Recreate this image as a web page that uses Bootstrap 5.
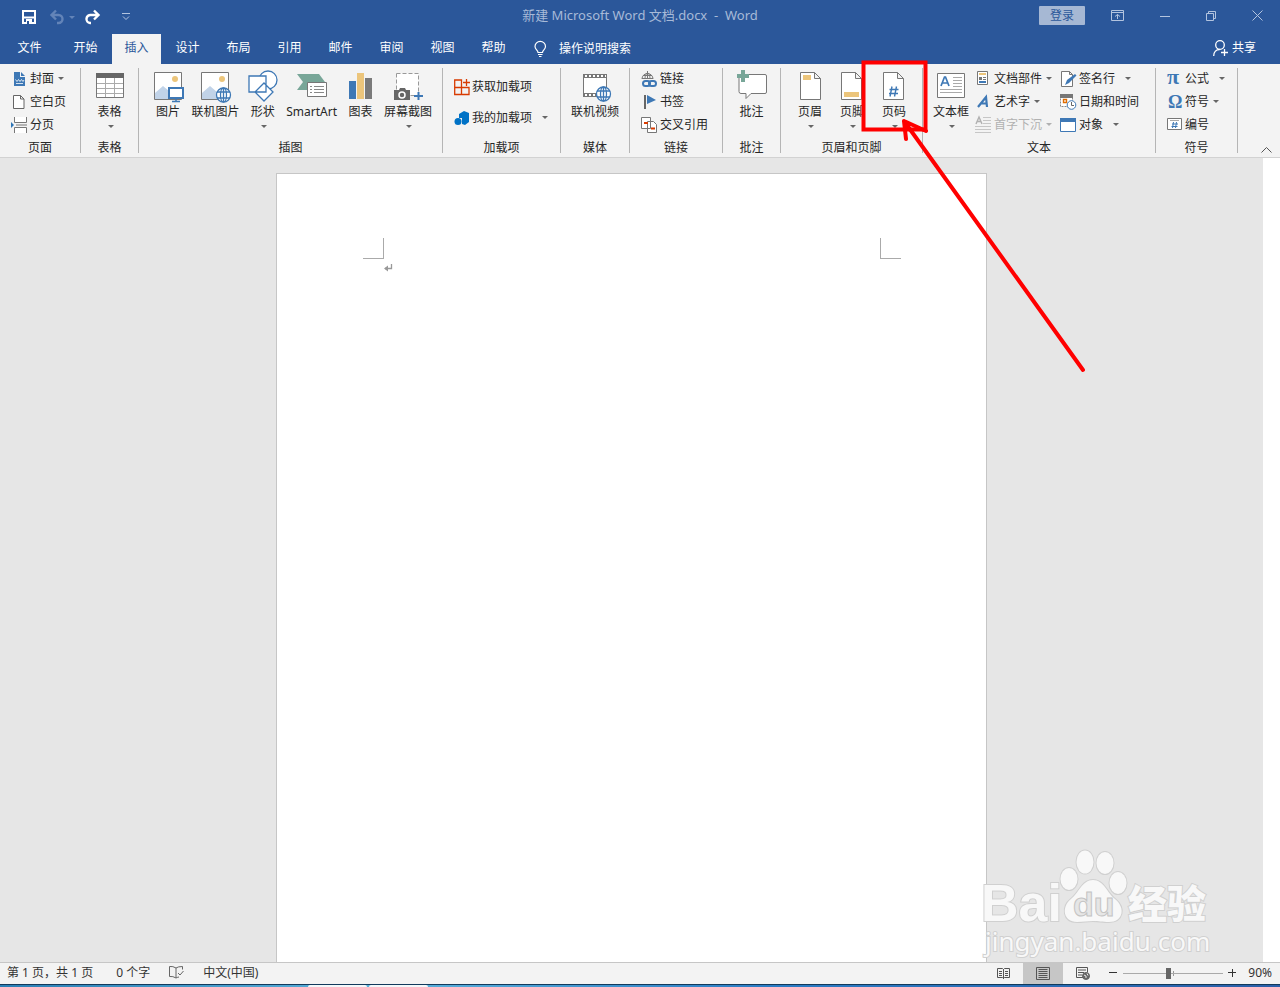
<!DOCTYPE html>
<html lang="zh-CN">
<head>
<meta charset="utf-8">
<meta name="viewport" content="width=device-width, initial-scale=1">
<title>新建 Microsoft Word 文档.docx - Word</title>
<link href="https://cdn.jsdelivr.net/npm/bootstrap@5.3.0/dist/css/bootstrap.min.css" rel="stylesheet">
<style>
  body { font: 12px/16px "Noto Sans", "Noto Sans CJK SC", sans-serif; color: #262626; background: #e6e6e6; }
  button { font: inherit; color: inherit; background: none; border: 0; padding: 0; white-space: nowrap; }
  svg { display: block; flex: none; overflow: visible; }
  .brand-bg { background: #2b579a; color: #fff; }
  .title-row { height: 34px; display: grid; grid-template-columns: 1fr auto 1fr; align-items: center; }
  .title-row h1 { font-size: 13px; line-height: 16px; font-weight: 400; color: #a7bad8; white-space: pre; margin: 0; padding-bottom: 4px; }
  .quick { padding-left: 22px; gap: 14px; }
  .quick .undo { gap: 4px; }
  .quick .redo { margin-left: -4px; margin-right: 4px; }
  .quick .undo .caret { border-top-color: #6384b8; }
  .win { gap: 36px; padding-right: 17px; padding-bottom: 3px; color: #b3c4df; }
  .signin { background: #a6b8d4; color: #2b579a; width: 46px; height: 19px; border-radius: 1px; line-height: 19px; margin-right: -10px; }
  .tabs-row { height: 30px; }
  .tabs-row .nav { gap: 2px; }
  .tabs-row .nav-link { width: 49px; height: 30px; padding: 0; line-height: 28px; text-align: center; color: #fff; border-radius: 0; }
  .tabs-row .file-tab { width: 59px; }
  .tabs-row .nav-link.active { background: #f3f3f3; color: #2b579a; }
  .tellme { gap: 12px; margin-left: 16px; }
  .share { gap: 4px; padding-right: 24px; padding-bottom: 2px; }
  .ribbon { height: 94px; background: #f3f3f3; border-bottom: 1px solid #d2d2d2; }
  .ribbon .vr { height: 85px; margin-top: 4px; opacity: 1; color: #b5b5b5; align-self: flex-start; flex: none; }
  .group { flex: none; display: flex; flex-direction: column; padding-top: 3px; }
  .group > .tools { height: 73px; display: flex; align-items: flex-start; }
  .group > .name { text-align: center; line-height: 16px; }
  .inset { padding-left: 11px; }
  .w57 { width: 57px; } .w68 { width: 68px; } .w80 { width: 80px; } .w81 { width: 81px; } .w92 { width: 92px; }
  .w117 { width: 117px; } .w141 { width: 141px; } .w232 { width: 232px; } .w303 { width: 303px; }
  .spread { justify-content: space-between; padding: 0 5px 0 12px; }
  .addins { padding: 4px 0 0 11px; }
  .pages { padding-left: 12px; gap: 8px; }
  .textual { padding-left: 5px; }
  .textual .stack + .stack { margin-left: 8px; }
  .big { display: flex; flex-direction: column; align-items: center; padding: 3px 5px 0; position: relative; }
  .big.narrow { width: 34px; }
  .big span { line-height: 18px; margin-top: 1px; }
  .big .caret { margin: 4px 0 0 2px; }
  .stack { display: flex; flex-direction: column; align-items: flex-start; }
  .textual .stack { margin-left: 1px; }
  .small-btn { display: flex; align-items: center; height: 23px; gap: 2px; }
  .small-btn .caret { margin-left: 2px; }
  .small-btn .caret.far { margin-left: 8px; }
  .caret { width: 0; height: 0; border: 3px solid transparent; border-top-color: #666; border-bottom: 0; }
  .tall .small-btn { height: 31px; }
  .disabled-tool { color: #b1b1b1; }
  .disabled-tool .caret { border-top-color: #b1b1b1; }
  .glyph { font-family: "Liberation Serif", serif; font-weight: 700; fill: #3e78b5; }
  .glyph.sans { font-family: "Liberation Sans", sans-serif; }
  .collapse-btn { padding: 0 8px 4px 0; }
  .callout-mark { position: absolute; left: 0; top: 0; pointer-events: none; z-index: 5; }
  .canvas { padding-top: 15px; min-height: 0; }
  .sheet { width: 711px; background: #fff; border: 1px solid #c6c6c6; border-bottom: 0; }
  .margins { padding: 64px 85px 0 86px; }
  .corner { width: 21px; height: 21px; border-bottom: 1px solid #aaa; }
  .corner.l { border-right: 1px solid #aaa; } .corner.r { border-left: 1px solid #aaa; }
  .pilcrow { margin: 5px 0 0 107px; }
  .scroll { width: 17px; background: #fff; }
  .watermark { position: absolute; right: 52px; bottom: 0; width: 246px; height: 118px; }
  .status { height: 22px; background: #f3f3f3; border-top: 1px solid #c6c6c6; color: #333; }
  .status .info { gap: 19px; padding: 0 0 2px 7px; }
  .status .tail { padding-right: 8px; }
  .status .view { width: 40px; height: 21px; display: flex; align-items: center; justify-content: center; }
  .status .view.on { background: #c6c6c6; }
  .status .minus { margin-left: 6px; }
  .status .pct { margin-left: 11px; padding-bottom: 1px; }
  .zoom { appearance: none; width: 100px; height: 12px; margin: 0 5px; background: linear-gradient(#aaa,#aaa) center/100% 1px no-repeat, linear-gradient(#999,#999) center/1px 5px no-repeat; }
  .zoom::-webkit-slider-thumb { appearance: none; width: 5px; height: 11px; background: #666; }
  .desk { height: 3px; padding-left: 308px; gap: 2px; border-top: 1px solid #123a5c; background: linear-gradient(90deg, #2a7fb5, #5cb3dc 30%, #2b7cc4 60%, #2b5fa8); }
  .desk i { width: 59px; background: #f4f8fb; border-radius: 2px 2px 0 0; }
</style>
</head>
<body>
<div class="vh-100 d-flex flex-column overflow-hidden">
<header class="brand-bg">
  <div class="title-row">
    <div class="quick d-flex align-items-center">
      <button aria-label="保存"><svg width="14" height="14" fill="none" stroke="#fff" stroke-width="2"><path d="M1 1h12v12H1zM1 7.500h12"/><path d="M4 9h6v4H4z" fill="#fff" stroke="none"/><path d="M5 11h2v3H5z" fill="#2b579a" stroke="none"/></svg></button>
      <button class="undo d-flex align-items-center" aria-label="撤消"><svg width="15" height="14" fill="none" stroke="#6384b8" stroke-width="2.400"><path d="M6 .5L1.500 5 6 9.500M2 5h6.500a4 4 0 0 1 0 8H7"/></svg><span class="caret"></span></button>
      <button class="redo" aria-label="恢复"><svg width="15" height="14" fill="none" stroke="#fff" stroke-width="2.400"><path d="M9 .5L13.500 5 9 9.500M13 5H6a4 4 0 0 0-1 8h1"/></svg></button>
      <button aria-label="自定义快速访问工具栏" class="ms-1"><svg width="8" height="8" fill="none" stroke="#b3c4df"><path d="M0 .5h8M1 3.500l3 3 3-3"/></svg></button>
    </div>
    <h1>新建 Microsoft Word 文档.docx  -  Word</h1>
    <div class="win d-flex align-items-center justify-content-end">
      <button class="signin">登录</button>
      <button aria-label="功能区显示选项"><svg width="13" height="11" fill="none" stroke="currentColor"><path d="M.5.5h12v10H.5zM.5 2.500h12M6.500 9V4.500M4 6.500l2.500-2 2.500 2"/></svg></button>
      <button aria-label="最小化"><svg width="10" height="10" stroke="currentColor"><path d="M0 5.500h10"/></svg></button>
      <button aria-label="还原"><svg width="10" height="10" fill="none" stroke="currentColor"><path d="M.5 2.500h7v7h-7zM2.500 2V.5h7v7H8"/></svg></button>
      <button aria-label="关闭"><svg width="11" height="11" stroke="currentColor"><path d="M.5.5l10 10M10.500.5l-10 10"/></svg></button>
    </div>
  </div>
  <div class="tabs-row d-flex">
    <nav class="nav flex-nowrap">
      <a class="nav-link file-tab" href="#">文件</a><a class="nav-link" href="#">开始</a><a class="nav-link active" href="#">插入</a><a class="nav-link" href="#">设计</a><a class="nav-link" href="#">布局</a><a class="nav-link" href="#">引用</a><a class="nav-link" href="#">邮件</a><a class="nav-link" href="#">审阅</a><a class="nav-link" href="#">视图</a><a class="nav-link" href="#">帮助</a>
    </nav>
    <button class="tellme d-flex align-items-center"><svg width="13" height="16" fill="none" stroke="#fff" stroke-width="1.200"><path d="M4 11.500C4 9 1 8.500 1 5.500a5.200 5 0 0 1 10.500 0c0 3-3 3.500-3 6zM4 13.500h4.500M5 15.500h2.500"/></svg>操作说明搜索</button>
    <button class="share d-flex align-items-center ms-auto"><svg width="15" height="16" fill="none" stroke="#fff" stroke-width="1.300"><circle cx="7" cy="5" r="4.300"/><path d="M.7 16c0-4 2.500-6.500 6-6.500M11.500 9v7M8 12.500h7"/></svg>共享</button>
  </div>
</header>

<div class="ribbon d-flex">
  <section class="group w80"><div class="tools inset"><div class="stack">
    <button class="small-btn"><svg width="17" height="16"><path d="M3 1h6v5h5v9H3z" fill="#3e78b5"/><path d="M10 1l4 4h-4z" fill="#3e78b5"/><path d="M4.500 8.500l1.500 2 1.500-2 1.500 2 1.500-2 1.500 2 1-1.500M5 12.500h7" fill="none" stroke="#fff" stroke-width=".8"/></svg>封面<i class="caret"></i></button>
    <button class="small-btn"><svg width="17" height="16" fill="#fff" stroke="#666"><path d="M2.500 1.500h7l3.500 3.500v9.500H2.500zM9.500 1.500V5H13"/></svg>空白页</button>
    <button class="small-btn"><svg width="17" height="16" fill="#fff" stroke="#777"><path d="M3.500 0v5.500h12V0M3.500 16v-5.500h12V16M5 8h11"/><path d="M0 5l3 3-3 3z" fill="#2e75b6" stroke="none"/></svg>分页</button>
  </div></div><div class="name">页面</div></section><div class="vr"></div>

  <section class="group w57"><div class="tools justify-content-center"><button class="big"><svg width="32" height="32"><path d="M2.500 3.500h27v24h-27z" fill="#fff" stroke="#777"/><path d="M2 3h28v5H2z" fill="#666"/><path d="M3 13.500h26M3 18.500h26M3 23.500h26M11.500 8v19M20.500 8v19" stroke="#aaa"/></svg><span>表格</span><i class="caret"></i></button></div><div class="name">表格</div></section><div class="vr"></div>

  <section class="group w303"><div class="tools spread">
    <button class="big narrow"><svg width="32" height="32"><path d="M2.500 2.500h27v27h-27z" fill="#fff" stroke="#777"/><circle cx="23" cy="9" r="3" fill="#ecc57b"/><path d="M3 29v-6l8-7 6 5v8z" fill="#c1d3e8"/><path d="M17 18h14v10H17z" fill="#fff" stroke="#3e78b5" stroke-width="2"/><path d="M24 28v3M20 31.500h8" stroke="#3e78b5" stroke-width="1.500"/></svg><span>图片</span></button>
    <button class="big"><svg width="32" height="32"><path d="M2.500 2.500h27v27h-27z" fill="#fff" stroke="#777"/><circle cx="23" cy="9" r="3" fill="#ecc57b"/><path d="M3 29v-6l8-7 7 6v7z" fill="#c1d3e8"/><g fill="#fff" stroke="#3e78b5" stroke-width="1.300"><circle cx="24.500" cy="25" r="7"/><ellipse cx="24.500" cy="25" rx="3" ry="7"/><path d="M18 22h13M18 28h13M24.500 18v14"/></g></svg><span>联机图片</span></button>
    <button class="big narrow"><svg width="32" height="32" fill="#fff" stroke="#3e78b5" stroke-width="1.300"><circle cx="21" cy="10" r="9"/><path d="M2 6h17v16H2zM17 13l9 9-9 9-9-9z"/></svg><span>形状</span><i class="caret"></i></button>
    <button class="big"><svg width="32" height="32"><path d="M1 4h22l6 8-7 8H1l6-8z" fill="#78a698"/><path d="M11.500 12.500h19v14h-19z" fill="#fff" stroke="#777"/><path d="M14 16.500h2M14 19.500h2M14 22.500h2M18 16.500h10M18 19.500h10M18 22.500h10" stroke="#888"/></svg><span>SmartArt</span></button>
    <button class="big narrow"><svg width="32" height="32"><path d="M4 11h7v18H4z" fill="#3e78b5"/><path d="M12 3h7v26h-7z" fill="#ecc57b"/><path d="M20 8h7v21h-7z" fill="#7a7a7a"/></svg><span>图表</span></button>
    <button class="big"><svg width="32" height="32"><path d="M4.500 3.500h22v22h-22z" fill="#fff" stroke="#999" stroke-dasharray="4 2"/><path d="M2 20h5l1-2h5l1 2h4v10H2z" fill="#666"/><circle cx="10" cy="25" r="3" fill="#666" stroke="#fff" stroke-width="1.500"/><path d="M22 26h9M26.500 22v8" stroke="#3e78b5" stroke-width="2"/></svg><span>屏幕截图</span><i class="caret"></i></button>
  </div><div class="name">插图</div></section><div class="vr"></div>

  <section class="group w117"><div class="tools addins"><div class="stack tall">
    <button class="small-btn"><svg width="16" height="16" fill="none" stroke="#d83b01" stroke-width="1.300"><path d="M7.500 15.500H.7V1h6.800v14.500H15V8.500H.7M12.500 0v7M9 3.500h7"/></svg>获取加载项</button>
    <button class="small-btn"><svg width="16" height="16" fill="#0072c6"><path d="M5 4l5-3 5 2v9l-4 3-3-1V8H5z"/><circle cx="4" cy="11.500" r="3.500"/></svg>我的加载项<i class="caret far"></i></button>
  </div></div><div class="name">加载项</div></section><div class="vr"></div>

  <section class="group w68"><div class="tools justify-content-center"><button class="big"><svg width="32" height="32"><path d="M4.500 4.500h23v22h-23z" fill="#fff" stroke="#777"/><path d="M4 6h24M4 25h14" stroke="#777" stroke-width="4"/><path d="M6 6h21M6 25h12" stroke="#fff" stroke-width="2" stroke-dasharray="2 2"/><g fill="#fff" stroke="#3e78b5" stroke-width="1.300"><circle cx="24.500" cy="24" r="7"/><ellipse cx="24.500" cy="24" rx="3" ry="7"/><path d="M18 21h13M18 27h13M24.500 17v14"/></g></svg><span>联机视频</span></button></div><div class="name">媒体</div></section><div class="vr"></div>

  <section class="group w92"><div class="tools inset"><div class="stack">
    <button class="small-btn"><svg width="17" height="16" fill="none"><g stroke="#777"><path d="M1 8a5.500 5.500 0 1 1 11 0M1 7.500h11M2 4.500h9M4 8c0-3 1-6 2.500-6S9 5 9 8M6.500 0v7"/></g><g stroke="#3e78b5" stroke-width="2"><rect x="2" y="10" width="7" height="5" rx="2.500"/><rect x="8" y="10" width="7" height="5" rx="2.500"/></g></svg>链接</button>
    <button class="small-btn"><svg width="17" height="16"><path d="M4 1v14" stroke="#666" stroke-width="2"/><path d="M6 1l9 5-9 4z" fill="#3e78b5"/></svg>书签</button>
    <button class="small-btn"><svg width="17" height="16" fill="#fff" stroke="#777"><path d="M.5.5h9v11h-9zM6.500 4.500h6l3 3v8h-9z"/><path d="M3 6h4M10 11.500h4" stroke="#d83b01" stroke-width="2"/></svg>交叉引用</button>
  </div></div><div class="name">链接</div></section><div class="vr"></div>

  <section class="group w57"><div class="tools justify-content-center"><button class="big"><svg width="32" height="32"><path d="M4 4.500h25q1.500 0 1.500 1.500v16q0 1.500-1.500 1.500H15l-5 5v-5H5q-2 0-2-2V5z" fill="#fff" stroke="#777"/><path d="M5 0h4v4h4v4H9v4H5V8H1V4h4z" fill="#78a698"/></svg><span>批注</span></button></div><div class="name">批注</div></section><div class="vr"></div>

  <section class="group w141"><div class="tools pages">
    <button class="big narrow"><svg width="32" height="32"><path d="M6.500 2.500h14l6 6v21h-20zM20.500 2.500v6h6" fill="#fff" stroke="#777"/><path d="M9 5h8v5H9z" fill="#ecc57b"/></svg><span>页眉</span><i class="caret"></i></button>
    <button class="big narrow"><svg width="32" height="32"><path d="M5.500 2.500h14l6 6v21h-20zM19.500 2.500v6h6" fill="#fff" stroke="#777"/><path d="M8 22h15v5H8z" fill="#ecc57b"/></svg><span>页脚</span><i class="caret"></i></button>
    <button class="big narrow"><svg width="32" height="32"><path d="M5.500 2.500h14l6 6v21h-20zM19.500 2.500v6h6" fill="#fff" stroke="#777"/><path d="M14 16.500l-2 10M18.500 16.500l-2 10M11.500 19.500h9M11 23.500h9" stroke="#3e78b5" stroke-width="1.400"/></svg><span>页码</span><i class="caret"></i>
      <svg class="callout-mark" width="210" height="310" fill="none" stroke="#f00"><path d="M-13.500-4.500h62v67h-62z" stroke-width="4"/><path d="M206 303L27 54l22 10M27 54l2 18" stroke-width="4" stroke-linecap="round" stroke-linejoin="round"/></svg></button>
  </div><div class="name">页眉和页脚</div></section><div class="vr"></div>

  <section class="group w232"><div class="tools textual">
    <button class="big"><svg width="32" height="32"><path d="M2.500 3.500h27v24h-27z" fill="#fff" stroke="#777"/><path d="M18 7.500h9M18 10.500h9M18 13.500h9M18 16.500h9M5 19.500h22M5 22.500h22" stroke="#aaa"/><path d="M6 16l3.500-9h1l3.500 9M7.500 13h5" stroke="#3e78b5" stroke-width="1.700" fill="none"/></svg><span>文本框</span><i class="caret"></i></button>
    <div class="stack">
      <button class="small-btn"><svg width="17" height="16"><path d="M2.500.5h10v13h-10z" fill="#fff" stroke="#777"/><path d="M4 2h7v2H4z" fill="#ecc57b"/><path d="M4 6h3v3H4z" fill="#777"/><path d="M8 6.500h3M8 8.500h3" stroke="#777"/><path d="M4 10h7v2H4z" fill="#3e78b5"/></svg>文档部件<i class="caret"></i></button>
      <button class="small-btn"><svg width="17" height="16"><path d="M3 13l8-10 1 10M5 9.500h6" fill="none" stroke="#3e78b5" stroke-width="2.200"/></svg>艺术字<i class="caret"></i></button>
      <button class="small-btn disabled-tool" disabled><svg width="17" height="16" fill="none" stroke="#c6c6c6"><path d="M8 .5h8M8 3.500h8M8 6.500h8M0 9.500h16M0 12.500h16M0 15.500h16"/><path d="M1 7L4 0l3 7M2 4.500h4" stroke="#b1b1b1" stroke-width="1.400"/></svg>首字下沉<i class="caret"></i></button>
    </div>
    <div class="stack">
      <button class="small-btn"><svg width="17" height="16"><path d="M1.500.5h8l3 3v12h-11zM9.500.5v3h3" fill="#fff" stroke="#777"/><path d="M5 14l2-5 8-6 1.500 1.500L9 12z" fill="#3e78b5"/></svg>签名行<i class="caret far"></i></button>
      <button class="small-btn"><svg width="17" height="16"><path d="M.5.5h12v12H.5z" fill="#fff" stroke="#888" stroke-dasharray="2 1"/><path d="M0 0h13v4H0z" fill="#777"/><path d="M3.500 5.500h3v3h-3z" fill="none" stroke="#e06c00" stroke-width="1.400"/><circle cx="11.500" cy="11" r="4.300" fill="#fff" stroke="#3e78b5"/><path d="M11.500 8v3.500H14" fill="none" stroke="#666"/></svg>日期和时间</button>
      <button class="small-btn"><svg width="17" height="16"><path d="M.5 1.500h15v13H.5z" fill="#fff" stroke="#3e78b5"/><path d="M0 1h16v4H0z" fill="#3e78b5"/></svg>对象<i class="caret far"></i></button>
    </div>
  </div><div class="name">文本</div></section><div class="vr"></div>

  <section class="group w81"><div class="tools inset"><div class="stack">
    <button class="small-btn"><svg width="16" height="16" aria-hidden="true"><text class="glyph" x="0" y="13" font-size="22">π</text></svg>公式<i class="caret far"></i></button>
    <button class="small-btn"><svg width="16" height="16" aria-hidden="true"><text class="glyph" x="1" y="14" font-size="18">Ω</text></svg>符号<i class="caret"></i></button>
    <button class="small-btn"><svg width="16" height="16"><path d="M.5 1.500h14v11H.5z" fill="#fff" stroke="#777"/><path d="M3 3.500h9" stroke="#aaa"/><path d="M6.500 5l-1 6M9.500 5l-1 6M5 7h6M4.500 9.500h6" stroke="#3e78b5"/></svg>编号</button>
  </div></div><div class="name">符号</div></section><div class="vr"></div>
  <button class="collapse-btn ms-auto align-self-end" aria-label="折叠功能区"><svg width="11" height="6" fill="none" stroke="#555"><path d="M.5 5.500l5-5 5 5"/></svg></button>
</div>

<main class="flex-grow-1 d-flex position-relative overflow-hidden">
  <div class="canvas flex-grow-1 d-flex justify-content-center">
    <article class="sheet">
      <div class="margins d-flex justify-content-between"><div class="corner l"></div><div class="corner r"></div></div>
      <svg class="pilcrow" width="9" height="8" fill="none" stroke="#999" stroke-width="1.300"><path d="M7.500 0v4.500H1"/><path d="M4 1.500v6L0 4.500z" fill="#999" stroke="none"/></svg>
    </article>
  </div>
  <div class="scroll"></div>
  <svg class="watermark" viewBox="0 0 246 118" role="img" aria-label="Baidu 经验 jingyan.baidu.com">
    <g fill="#f8f8f8" stroke="#d0d0d0" stroke-width="2" paint-order="stroke">
      <text x="-1" y="77" font-family="Liberation Sans" font-weight="700" font-size="52">Bai</text>
      <ellipse cx="87" cy="35" rx="8.500" ry="11"/><ellipse cx="103" cy="18" rx="8.500" ry="11.500"/><ellipse cx="123" cy="19" rx="8.500" ry="11"/><ellipse cx="136" cy="39" rx="8.500" ry="11"/>
      <path d="M111 36c11 0 14 13 22 19 11 9 8 23-6 23-7 0-10-1-16-1s-10 1-16 1c-14 0-16-15-6-23 8-6 11-19 22-19z"/>
      <text x="146" y="74" font-family="Noto Sans CJK SC" font-weight="900" font-size="39">经验</text>
      <text x="3" y="107" font-family="Noto Sans" font-size="26">jingyan.baidu.com</text>
    </g>
    <text x="91" y="72" font-family="Liberation Sans" font-weight="700" font-size="34" fill="#e6e6e6" stroke="#c4c4c4">du</text>
  </svg>
</main>

<footer>
  <div class="status d-flex align-items-center">
    <div class="info d-flex align-items-center"><span class="me-1">第 1 页，共 1 页</span><span>0 个字</span><svg width="15" height="13" fill="none" stroke="#666"><path d="M7 2Q4 0 .5.500v10Q4 10 7 12q2-1 3-1M7 2v10M7 2q2-1.500 6.500-1.500v3M9 7l2 2 3.500-4"/></svg><span>中文(中国)</span></div>
    <div class="tail ms-auto d-flex align-items-center">
      <button class="view" aria-label="阅读视图"><svg width="13" height="13" fill="none" stroke="#555"><path d="M.5 1.500h5l1 1 1-1h5v9h-5l-1 1-1-1h-5zM6.500 2v10M2 4.500h3M2 6.500h3M2 8.500h3M8 4.500h3M8 6.500h3M8 8.500h3"/></svg></button>
      <button class="view on" aria-label="页面视图"><svg width="14" height="13" fill="none" stroke="#555"><path d="M.5.5h13v12H.5zM2.500 2.500h9M2.500 4.500h9M2.500 6.500h9M2.500 8.500h9M2.500 10.500h9"/></svg></button>
      <button class="view" aria-label="Web 版式视图"><svg width="14" height="13" fill="none" stroke="#555"><path d="M7 10.500H.5V.5h11v5M2 3h8M2 5.500h6M2 8h4"/><circle cx="10" cy="9" r="3.500" fill="#666" stroke="#666"/><path d="M8 8l2 1v2M11 6.500l1 2" stroke="#eee"/></svg></button>
      <button class="minus" aria-label="缩小"><svg width="9" height="9" stroke="#333"><path d="M0 3.500h8"/></svg></button>
      <input class="zoom" type="range" min="10" max="190" value="90" step="1" aria-label="缩放">
      <button aria-label="放大"><svg width="9" height="9" stroke="#333"><path d="M0 3.500h8M4.500 0v8"/></svg></button>
      <span class="pct">90%</span>
    </div>
  </div>
  <div class="desk d-flex"><i></i><i></i></div>
</footer>
</div>
<script src="https://cdn.jsdelivr.net/npm/bootstrap@5.3.0/dist/js/bootstrap.bundle.min.js"></script>
</body>
</html>
